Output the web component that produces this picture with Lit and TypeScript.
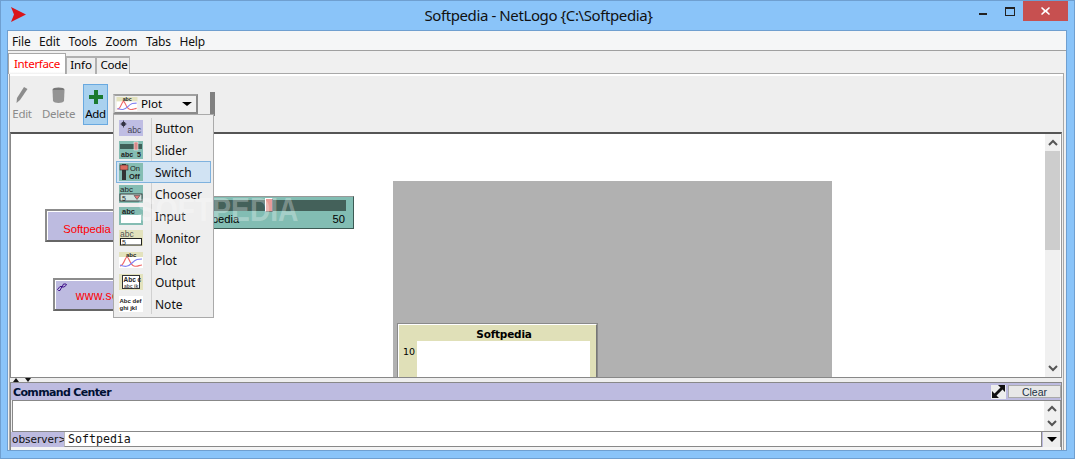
import { LitElement, html, css, svg } from "lit";
import { customElement } from "lit/decorators.js";

const abcText = (x: number, y: number, s: number, t: string, c = "#333", w = "700") =>
  svg`<text x=${x} y=${y} font-size=${s} font-family="Liberation Sans, sans-serif" font-weight=${w} fill=${c}>${t}</text>`;

const icons: Record<string, unknown> = {
  Button: html`<svg width="24" height="16" viewBox="0 0 24 16"><rect width="24" height="16" fill="#bfbde3"/><circle cx="4.5" cy="4" r="2.2" fill="#334"/><path d="M4.500 .5v7M1.500 4h6" stroke="#334" stroke-width=".8"/>${abcText(8.5, 13, 8.5, "abc", "#445", "400")}</svg>`,
  Slider: html`<svg width="24" height="18" viewBox="0 0 24 18"><rect width="24" height="18" fill="#85bdb3"/><rect x="1" y="3" width="22" height="5" fill="#3f5f58"/><rect x="15" y="1" width="4" height="8" fill="#d98a8a" stroke="#fff" stroke-width=".5"/>${abcText(2, 16, 7, "abc", "#222")}${abcText(18, 16, 7, "5", "#222")}</svg>`,
  Switch: html`<svg width="24" height="18" viewBox="0 0 24 18"><rect width="24" height="18" fill="#85bdb3"/><rect x="3" y="1" width="4" height="16" fill="#333"/><rect x="1" y="2" width="8" height="5" fill="#d96a5e" stroke="#333" stroke-width=".6"/>${abcText(11, 8, 7.5, "On", "#222", "400")}${abcText(10, 16, 7.5, "Off", "#222", "700")}</svg>`,
  Chooser: html`<svg width="24" height="18" viewBox="0 0 24 18"><rect y="0" width="24" height="18" fill="#85bdb3"/>${abcText(1, 7, 8, "abc", "#222", "400")}<rect x="1" y="9" width="22" height="7" fill="#cfe3df" stroke="#222" stroke-width=".8"/>${abcText(3, 15.5, 7, "5", "#222", "400")}<path d="M15 10.500h6l-3 4z" fill="#e07a7a" stroke="#333" stroke-width=".5"/></svg>`,
  Input: html`<svg width="24" height="18" viewBox="0 0 24 18"><rect width="24" height="18" fill="#85bdb3"/>${abcText(3, 7, 7.5, "abc", "#222")}<rect x="2" y="8" width="20" height="8" fill="#fff"/></svg>`,
  Monitor: html`<svg width="24" height="16" viewBox="0 0 24 16"><rect width="24" height="16" fill="#e3e2bd"/>${abcText(1, 7, 8.5, "abc", "#555", "400")}<rect x="1.500" y="8.500" width="21" height="6.500" fill="#fff" stroke="#222"/>${abcText(3, 14.500, 7, "5", "#222", "400")}</svg>`,
  Plot: html`<svg width="24" height="16" viewBox="0 0 24 16"><rect width="24" height="16" fill="#e3e2bd"/><rect x="0" y="5" width="24" height="11" fill="#fff"/>${abcText(7, 5, 6, "abc", "#222")}<path d="M1 14C5 14 6 5 8 5s3 8 7 9 5-1 8-1" fill="none" stroke="#f06868" stroke-width="1.200"/><path d="M1 13c5 2 8 2 12-2s6-4 10-4" fill="none" stroke="#8080f0" stroke-width="1.200"/></svg>`,
  Output: html`<svg width="24" height="16" viewBox="0 0 24 16"><rect width="24" height="16" fill="#e3e2bd"/><rect x="3.500" y="1.500" width="17" height="13" fill="#fff" stroke="#333"/>${abcText(4.500, 8, 6.500, "Abc c", "#222")}${abcText(5, 13.500, 5, "abc jk", "#555")}</svg>`,
  Note: html`<svg width="24" height="16" viewBox="0 0 24 16"><rect width="24" height="16" fill="#fff"/>${abcText(0.5, 7, 6, "Abc def", "#222")}${abcText(0.5, 14, 6, "ghi jkl", "#222")}</svg>`,
};

const items = ["Button", "Slider", "Switch", "Chooser", "Input", "Monitor", "Plot", "Output", "Note"];

@customElement("app-root")
export class AppRoot extends LitElement {
  static styles = css`
    :host { display: block; font-family: "Noto Sans", "Open Sans", sans-serif; font-size: 12px; color: #000; }
    .root { position: relative; width: 1075px; height: 459px; box-sizing: border-box; background: #8ac4f9; border: 1px solid #6f9fd0; display: flex; flex-direction: column; overflow: hidden; }
    .title { height: 29px; flex: none; display: flex; align-items: center; }
    .logo { margin-left: 10px; flex: none; margin-top: -2px; }
    .title-text { flex: 1; text-align: center; font-size: 15px; letter-spacing: -.4px; color: #111; margin-left: 71px; margin-top: -1px; }
    .controls { display: flex; align-items: flex-start; align-self: flex-start; margin-right: 6px; }
    .min { width: 8px; height: 2px; background: #222; margin: 12px 18px 0 0; }
    .max { width: 8px; height: 6px; border: 1px solid #222; border-top-width: 2px; margin: 6px 8px 0 0; }
    .close { width: 45px; height: 20px; background: #c75050; display: flex; align-items: center; justify-content: center; }
    .client { flex: 1; margin: 0 7px 7px 6px; border: 1px solid #6f9fd0; background: #f0f0f0; display: flex; flex-direction: column; min-height: 0; }
    .menubar { height: 18px; padding-top: 1px; flex: none; background: #f5f6f7; display: flex; align-items: center; padding-left: 4px; gap: 8.5px; border-bottom: 1px solid #a0a0a0; font-size: 12px; letter-spacing: -.15px; color: #111; }
    .tabs { height: 22px; flex: none; display: flex; align-items: flex-end; padding-left: 0; background: #f0f0f0; position: relative; z-index: 1; }
    .tab { height: 18px; margin-bottom: -1px; padding-bottom: 3px; box-sizing: border-box; border: 2px solid #b0b0b0; border-left-width: 1px; border-right-width: 1px; border-bottom: 0; display: flex; align-items: center; justify-content: center; background: #eeeeee; font-size: 11.6px; letter-spacing: -.1px; }
    .tab.active { height: 21px; width: 58px; color: #f00; border: 1px solid #a8a8a8; border-bottom: 0; padding-bottom: 2px; font-size: 11.6px; letter-spacing: -.35px; background: linear-gradient(#fff 90%, #eee); }
    .tab.info { width: 30px; }
    .tab.code { width: 34px; padding-left: 2px; letter-spacing: -.3px; }
    .panel { flex: 1; min-height: 0; margin: 0 2px 0 1px; border: 1px solid #a8a8a8; border-bottom: 0; display: flex; flex-direction: column; }
    .toolbar { height: 56px; flex: none; background: #eeeeee; border-top: 2px solid #fff; display: flex; position: relative; }
    .tool { width: 24px; display: flex; flex-direction: column; align-items: center; justify-content: flex-start; font-size: 11.5px; letter-spacing: -.3px; color: #8a8a8a; padding-top: 11px; box-sizing: border-box; gap: 2px; }
    .tool .lbl { line-height: 16px; margin-top: 1px; }
    .tool.delete { width: 49px; }
    .tool.add { width: 25px; height: 41px; box-sizing: border-box; margin: 8px 0 0 0; background: #a9d1ef; border: 1px solid #69a9e0; color: #000; padding-top: 5px; gap: 1px; }
    .combo { margin: 18px 0 0 5px; width: 85px; height: 20px; box-sizing: border-box; border: 2px solid #8a8a8a; border-top-color: #a0a0a0; border-left-color: #c8c8c8; background: #f0f0f0; display: flex; align-items: center; gap: 3px; padding-left: 1px; font-size: 11.6px; }
    .combo svg { width: 22px; height: 14px; flex: none; }
    .combo .txt { flex: 1; padding-bottom: 2px; }
    .combo .arrow { width: 0; height: 0; border: 4px solid transparent; border-top: 4px solid #000; border-bottom: 0; margin-right: 4px; border-left-width: 5px; border-right-width: 5px; }
    .grip { width: 5px; height: 24px; background: #808080; margin: 16px 0 0 12px; }
    .world-row { flex: none; height: 243px; display: flex; margin: 0 1px 0 0; border-top: 2px solid #555; border-left: 1px solid #888; border-right: 1px solid #999; border-bottom: 1px solid #888; }
    .canvas { flex: 1; background: #fff; position: relative; overflow: hidden; }
    .vscroll { width: 15px; flex: none; background: #f0f0f0; border-right: 1px solid #fff; display: flex; flex-direction: column; align-items: center; }
    .vscroll .sb { height: 17px; display: flex; align-items: center; justify-content: center; flex: none; }
    .vscroll .thumb { width: 100%; height: 99px; background: #cdcdcd; flex: none; }
    .vscroll .rest { flex: 1; }
    .widget { position: absolute; box-sizing: border-box; }
    .btn { background: #bdbbe0; border: 2px solid; border-color: #8c8c8c #666 #666 #8c8c8c; display: flex; align-items: center; justify-content: center; color: #f00; font-family: "Liberation Sans", sans-serif; font-size: 11.3px; }
    .b1 { left: 34px; top: 75px; width: 84px; height: 33px; padding-top: 6px; box-shadow: inset 1px 1px 0 #fff; }
    .b2 { left: 42px; top: 144px; width: 150px; height: 33px; font-size: 12px; padding: 2px 0 0 4px; letter-spacing: .3px; box-shadow: inset 1px 1px 0 #fff; }
    .link { position: absolute; left: 2px; top: 3px; }
    .slider { left: 170px; top: 62px; width: 173px; height: 33px; background: #82bdb3; border: 1px solid; border-color: #999 #3c5a54 #3c5a54 #999; font-family: "Liberation Sans", sans-serif; font-size: 11.2px; }
    .track { position: absolute; left: 8px; right: 7px; top: 3px; height: 11px; background: #44615a; }
    .thumb-s { position: absolute; left: 83px; top: 1px; width: 8px; height: 14px; background: #e79a96; border: 1px solid; border-color: #fff #777 #777 #fff; box-sizing: border-box; }
    .sl-label { position: absolute; left: 10px; top: 16px; }
    .sl-val { position: absolute; right: 8px; top: 16px; }
    .world { left: 382px; top: 47px; width: 439px; height: 197px; background: #b1b1b1; }
    .plot { left: 387px; top: 190px; width: 199px; height: 60px; background: #e0e0b8; border: 1px solid #fff; border-right-color: #777; box-shadow: inset 0 0 0 1px #e0e0b8, 0 0 0 1px #8a8a8a; font-family: "DejaVu Sans", sans-serif; font-size: 10.5px; }
    .plot-title { text-align: center; font-weight: 700; margin-top: 2px; line-height: 14px; padding-left: 13px; font-size: 10.5px; letter-spacing: -.2px; }
    .plot-y { position: absolute; left: 4px; top: 20px; font-size: 9.5px; line-height: 13px; }
    .plot-area { position: absolute; left: 18px; right: 6px; top: 16px; bottom: 0; background: #fff; }
    .split { height: 4px; flex: none; background: #eee; position: relative; margin-right: 1px; }
    .tri { position: absolute; top: 0; width: 0; height: 0; border: 3.5px solid transparent; }
    .tri.up { left: 3px; border-bottom: 4px solid #111; border-top: 0; }
    .tri.down { left: 15px; border-top: 4px solid #111; border-bottom: 0; }
    .cc { flex: 1; min-height: 0; display: flex; flex-direction: column; margin-right: 1px; border: 1px solid #888; border-bottom: 0; }
    .cc-head { height: 17px; flex: none; background: #bdbbe0; display: flex; align-items: center; font-family: "DejaVu Sans", sans-serif; font-size: 11px; letter-spacing: -.65px; font-weight: 700; color: #001133; padding-left: 2px; }
    .cc-head > span:first-child { padding-top: 2px; }
    .cc-head .grow { flex: 1; }
    .expand { width: 15px; height: 14px; background: #eee; display: flex; align-items: center; justify-content: center; margin-right: 2px; }
    .clear { width: 53px; height: 13px; box-sizing: border-box; border: 1px solid #aaa; background: #e8e8e8; font-family: "Liberation Sans", sans-serif; font-size: 10.5px; letter-spacing: 0; font-weight: 400; color: #234; display: flex; align-items: center; justify-content: center; }
    .cc-body { height: 30px; flex: none; display: flex; background: #fff; border-top: 1px solid #888; border-bottom: 1px solid #888; margin: 0 0 0 1px; }
    .cc-body .grow { flex: 1; border-left: 1px solid #888; }
    .cc-scroll { width: 16px; background: #f0f0f0; display: flex; flex-direction: column; align-items: center; justify-content: space-around; border-right: 1px solid #999; }
    .cc-input { height: 15px; flex: none; display: flex; background: #bdbbe0; }
    .obs { width: 52px; font-family: "DejaVu Sans", sans-serif; font-size: 10.5px; color: #111; line-height: 15px; padding-left: 1px; flex: none; }
    .inp { flex: 1; background: #fff; border: 1px solid #888; border-top: 0; border-left: 1px solid #bbb; font-family: "DejaVu Sans Mono", monospace; font-size: 11.6px; line-height: 14px; padding-left: 3px; color: #111; }
    .drop { width: 17px; background: #eee; margin-left: 1px; display: flex; align-items: center; justify-content: center; flex: none; border-right: 1px solid #999; }
    .drop i { width: 0; height: 0; border: 5px solid transparent; border-top: 5px solid #000; border-bottom: 0; }
    .foot { flex: 1; background: #f4f4f4; }
    .menu { position: absolute; left: 112px; top: 113px; width: 101px; height: 204px; box-sizing: border-box; background: #eeeeee; border: 1px solid #aaa; padding: 2px 2px; z-index: 3; font-size: 12px; }
    .menu::before { content: ""; position: absolute; left: 37px; top: 3px; bottom: 3px; width: 1px; background: #d0d0d0; }
    .mi { height: 22px; box-sizing: border-box; display: flex; align-items: center; padding-left: 3px; color: #111; position: relative; }
    .mi.hi { background: #d1e3f3; border: 1px solid #7fb2de; padding-left: 2px; }
    .mi .ic { width: 24px; height: 18px; display: flex; align-items: center; justify-content: center; flex: none; }
    .mi svg { display: block; }
    .mi .t { margin-left: 12px; }
    .mark { position: absolute; left: 136px; top: 190px; z-index: 4; font-family: "Liberation Sans", sans-serif; font-weight: 700; font-size: 34px; color: rgba(255,255,255,.3); line-height: 36px; pointer-events: none; transform: scaleX(.83); transform-origin: left; }
  `;

  chev(up: boolean, c = "#555") {
    return html`<svg width="10" height="7" viewBox="0 0 10 7"><path d=${up ? "M1 6l4-4 4 4" : "M1 1l4 4 4-4"} fill="none" stroke=${c} stroke-width="2"/></svg>`;
  }

  render() {
    return html`<div class="root">
      <div class="title">
        <svg class="logo" width="16" height="15" viewBox="0 0 16 15"><path d="M0 0l15 7.500L0 15l3-7.500z" fill="#d9141a"/></svg>
        <div class="title-text">Softpedia - NetLogo {C:\\Softpedia}</div>
        <div class="controls">
          <div class="min"></div>
          <div class="max"></div>
          <div class="close"><svg width="9" height="8" viewBox="0 0 9 8"><path d="M1 0l3.500 3L8 0l1 1-3 3 3 3-1 1-3.500-3L1 8 0 7l3-3-3-3z" fill="#fff"/></svg></div>
        </div>
      </div>
      <div class="client">
        <div class="menubar"><span>File</span><span>Edit</span><span>Tools</span><span>Zoom</span><span>Tabs</span><span>Help</span></div>
        <div class="tabs">
          <div class="tab active">Interface</div>
          <div class="tab info">Info</div>
          <div class="tab code">Code</div>
        </div>
        <div class="panel">
          <div class="toolbar">
            <div class="tool edit">
              <svg width="12" height="16" viewBox="0 0 12 16"><path d="M8 0l3.500 2L4 13l-3.500 3 .5-5z" fill="#8c8c8c"/></svg>
              <span class="lbl">Edit</span>
            </div>
            <div class="tool delete">
              <svg width="13" height="16" viewBox="0 0 13 16"><ellipse cx="6.500" cy="2.500" rx="6" ry="2" fill="#777"/><path d="M.5 3h12l-.5 11c-1 2.500-10 2.500-11 0z" fill="#949494"/></svg>
              <span class="lbl">Delete</span>
            </div>
            <div class="tool add">
              <svg width="14" height="14" viewBox="0 0 14 14"><path d="M5 0h4v5h5v4H9v5H5V9H0V5h5z" fill="#1b7a30"/></svg>
              <span class="lbl">Add</span>
            </div>
            <div class="combo">${icons.Plot}<span class="txt">Plot</span><span class="arrow"></span></div>
            <div class="grip"></div>
          </div>
          <div class="world-row">
            <div class="canvas">
              <div class="widget btn b1">Softpedia</div>
              <div class="widget btn b2">
                <svg class="link" width="10" height="8" viewBox="0 0 10 8"><path d="M1.500 7.500l-1-1 2.500-3h2l-2 4zM5 4l1.500-3h2.500l.5 1-2.500 2z" fill="none" stroke="#41128a"/></svg>
                www.softpedia.com
              </div>
              <div class="widget slider">
                <div class="track"></div><div class="thumb-s"></div>
                <span class="sl-label">Softpedia</span><span class="sl-val">50</span>
              </div>
              <div class="widget world"></div>
              <div class="widget plot">
                <div class="plot-title">Softpedia</div>
                <div class="plot-y">10</div>
                <div class="plot-area"></div>
              </div>
            </div>
            <div class="vscroll">
              <div class="sb">${this.chev(true)}</div>
              <div class="thumb"></div>
              <div class="rest"></div>
              <div class="sb">${this.chev(false)}</div>
            </div>
          </div>
          <div class="split"><i class="tri up"></i><i class="tri down"></i></div>
          <div class="cc">
            <div class="cc-head">
              <span>Command Center</span><span class="grow"></span>
              <div class="expand"><svg width="13" height="13" viewBox="0 0 13 13"><path d="M6 0h7v7l-2.500-2.500-6 6L7 13H0V6l2.500 2.500 6-6z" fill="#111"/></svg></div>
              <div class="clear">Clear</div>
            </div>
            <div class="cc-body">
              <div class="grow"></div>
              <div class="cc-scroll">${this.chev(true)}${this.chev(false)}</div>
            </div>
            <div class="cc-input">
              <div class="obs">observer&gt;</div>
              <div class="inp">Softpedia</div>
              <div class="drop"><i></i></div>
            </div>
            <div class="foot"></div>
          </div>
        </div>
      </div>
      <div class="menu">
        ${items.map((n) => html`<div class="mi ${n === "Switch" ? "hi" : ""}"><span class="ic">${icons[n]}</span><span class="t">${n}</span></div>`)}
      </div>
      <div class="mark">SOFTPEDIA</div>
    </div>`;
  }
}
